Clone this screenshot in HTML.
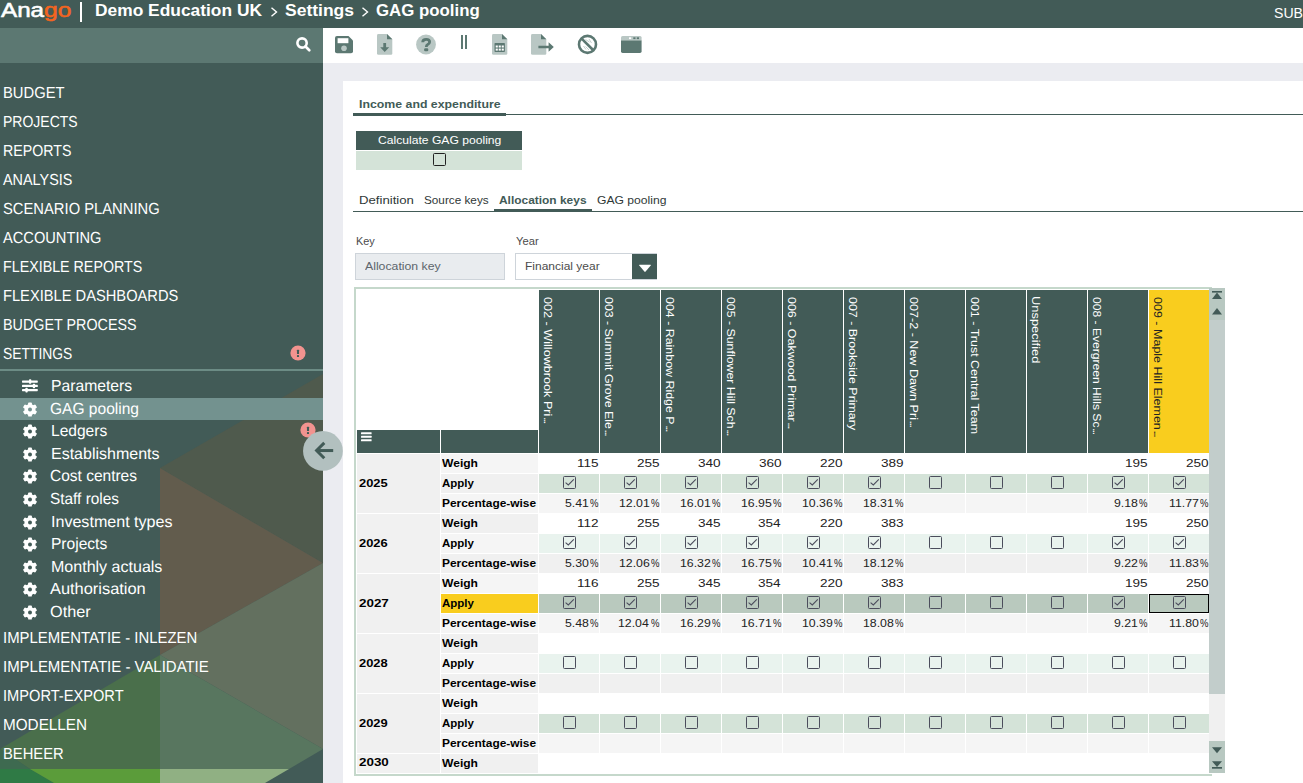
<!DOCTYPE html>
<html><head><meta charset="utf-8"><title>GAG pooling</title>
<style>
html,body{margin:0;padding:0}
body{width:1303px;height:783px;overflow:hidden;background:#fff;font-family:"Liberation Sans", sans-serif;position:relative}
.a{position:absolute}
.t{position:absolute;white-space:nowrap;line-height:20px;transform-origin:0 0;display:block}
.cb{position:absolute;width:11px;height:11px;border:1px solid #4b4d5c;border-radius:1.5px}
.cb svg{position:absolute;left:0;top:0}
.vh{position:absolute;white-space:nowrap;font-size:11.8px;line-height:14px;transform-origin:0 0;transform:rotate(90deg);color:#fff}

</style></head><body>
<div class="a" style="left:0;top:0;width:1303px;height:28px;background:#425b57"></div>
<div class="a" style="left:80.3px;top:2px;width:1.9px;height:20px;background:#fff"></div>
<svg class="a" style="left:269.6px;top:6px" width="9" height="12" viewBox="0 0 9 12"><polyline points="1.5,1.8 6.5,6 1.5,10.2" fill="none" stroke="#fff" stroke-width="1.4"/></svg>
<svg class="a" style="left:360.6px;top:6px" width="9" height="12" viewBox="0 0 9 12"><polyline points="1.5,1.8 6.5,6 1.5,10.2" fill="none" stroke="#fff" stroke-width="1.4"/></svg>
<div class="a" style="left:0;top:28px;width:323px;height:755px;background:#425b57"></div>
<svg class="a" style="left:0;top:0" width="323" height="783" viewBox="0 0 323 783">
<polygon points="160,468 323,374 323,563" fill="#4f5a4d"/>
<polygon points="160,468 323,563 160,655" fill="#625c4d"/>
<polygon points="160,655 323,563 323,749" fill="#63705f"/>
<polygon points="160,655 323,749 289,769 160,769" fill="#58765f"/>
<polygon points="0,749 160,655 160,769 30,769" fill="#4a6f4b"/>
<polygon points="0,749 30,769 0,769" fill="#3e6a50"/>
<polygon points="0,769 30,769 54,783 0,783" fill="#2f7a45"/>
<polygon points="30,769 160,769 160,783 54,783" fill="#5b9c3a"/>
<polygon points="160,769 289,769 265,783 160,783" fill="#90b083"/>
</svg>
<div class="a" style="left:0;top:28px;width:323px;height:35px;background:#5c7872"></div>
<svg class="a" style="left:296px;top:37px" width="16" height="16" viewBox="0 0 16 16"><circle cx="6.05" cy="6" r="4.65" fill="none" stroke="#fff" stroke-width="2.6"/><line x1="9.5" y1="9.5" x2="13.3" y2="13.3" stroke="#fff" stroke-width="2.7" stroke-linecap="round"/></svg>
<div class="a" style="left:0;top:369px;width:323px;height:2px;background:#6c8c85"></div>
<div class="a" style="left:0;top:398px;width:323px;height:22px;background:#73928f"></div>
<svg class="a" style="left:290.2px;top:345.3px" width="16" height="16" viewBox="0 0 16 16"><circle cx="8" cy="8" r="7.6" fill="#f2938f"/><rect x="6.95" y="4.7" width="2.1" height="4.3" rx="0.5" fill="#3f5b57"/><rect x="6.95" y="10.1" width="2.1" height="1.9" rx="0.6" fill="#3f5b57"/></svg>
<svg class="a" style="left:300.2px;top:422.35px" width="16" height="16" viewBox="0 0 16 16"><circle cx="8" cy="8" r="7.6" fill="#f2938f"/><rect x="6.95" y="4.7" width="2.1" height="4.3" rx="0.5" fill="#3f5b57"/><rect x="6.95" y="10.1" width="2.1" height="1.9" rx="0.6" fill="#3f5b57"/></svg>
<svg class="a" style="left:22px;top:378px" width="16" height="15" viewBox="0 0 16 15"><g fill="#fff"><rect x="0" y="2.4" width="15.8" height="2.3" rx="0.6"/><rect x="0" y="6.8" width="15.8" height="2.3" rx="0.6"/><rect x="0" y="10.9" width="15.8" height="2.3" rx="0.6"/><rect x="7" y="1.2" width="2.3" height="4.6" rx="0.7"/><rect x="10.8" y="5.7" width="2.3" height="4.6" rx="0.7"/><rect x="3.4" y="9.8" width="2.3" height="4.6" rx="0.7"/></g></svg>
<svg class="a" style="left:23px;top:401.5px" width="14" height="15" viewBox="-7 -7.5 14 15"><g fill="#fff"><circle r="5.5"/><rect x="-1.9" y="-7.1" width="3.8" height="4" rx="0.9" transform="rotate(0)"/><rect x="-1.9" y="-7.1" width="3.8" height="4" rx="0.9" transform="rotate(60)"/><rect x="-1.9" y="-7.1" width="3.8" height="4" rx="0.9" transform="rotate(120)"/><rect x="-1.9" y="-7.1" width="3.8" height="4" rx="0.9" transform="rotate(180)"/><rect x="-1.9" y="-7.1" width="3.8" height="4" rx="0.9" transform="rotate(240)"/><rect x="-1.9" y="-7.1" width="3.8" height="4" rx="0.9" transform="rotate(300)"/></g><circle r="2.0" fill="#73928f"/></svg>
<svg class="a" style="left:23px;top:423.5px" width="14" height="15" viewBox="-7 -7.5 14 15"><g fill="#fff"><circle r="5.5"/><rect x="-1.9" y="-7.1" width="3.8" height="4" rx="0.9" transform="rotate(0)"/><rect x="-1.9" y="-7.1" width="3.8" height="4" rx="0.9" transform="rotate(60)"/><rect x="-1.9" y="-7.1" width="3.8" height="4" rx="0.9" transform="rotate(120)"/><rect x="-1.9" y="-7.1" width="3.8" height="4" rx="0.9" transform="rotate(180)"/><rect x="-1.9" y="-7.1" width="3.8" height="4" rx="0.9" transform="rotate(240)"/><rect x="-1.9" y="-7.1" width="3.8" height="4" rx="0.9" transform="rotate(300)"/></g><circle r="2.0" fill="#425b57"/></svg>
<svg class="a" style="left:23px;top:446.5px" width="14" height="15" viewBox="-7 -7.5 14 15"><g fill="#fff"><circle r="5.5"/><rect x="-1.9" y="-7.1" width="3.8" height="4" rx="0.9" transform="rotate(0)"/><rect x="-1.9" y="-7.1" width="3.8" height="4" rx="0.9" transform="rotate(60)"/><rect x="-1.9" y="-7.1" width="3.8" height="4" rx="0.9" transform="rotate(120)"/><rect x="-1.9" y="-7.1" width="3.8" height="4" rx="0.9" transform="rotate(180)"/><rect x="-1.9" y="-7.1" width="3.8" height="4" rx="0.9" transform="rotate(240)"/><rect x="-1.9" y="-7.1" width="3.8" height="4" rx="0.9" transform="rotate(300)"/></g><circle r="2.0" fill="#425b57"/></svg>
<svg class="a" style="left:23px;top:468.5px" width="14" height="15" viewBox="-7 -7.5 14 15"><g fill="#fff"><circle r="5.5"/><rect x="-1.9" y="-7.1" width="3.8" height="4" rx="0.9" transform="rotate(0)"/><rect x="-1.9" y="-7.1" width="3.8" height="4" rx="0.9" transform="rotate(60)"/><rect x="-1.9" y="-7.1" width="3.8" height="4" rx="0.9" transform="rotate(120)"/><rect x="-1.9" y="-7.1" width="3.8" height="4" rx="0.9" transform="rotate(180)"/><rect x="-1.9" y="-7.1" width="3.8" height="4" rx="0.9" transform="rotate(240)"/><rect x="-1.9" y="-7.1" width="3.8" height="4" rx="0.9" transform="rotate(300)"/></g><circle r="2.0" fill="#425b57"/></svg>
<svg class="a" style="left:23px;top:491.5px" width="14" height="15" viewBox="-7 -7.5 14 15"><g fill="#fff"><circle r="5.5"/><rect x="-1.9" y="-7.1" width="3.8" height="4" rx="0.9" transform="rotate(0)"/><rect x="-1.9" y="-7.1" width="3.8" height="4" rx="0.9" transform="rotate(60)"/><rect x="-1.9" y="-7.1" width="3.8" height="4" rx="0.9" transform="rotate(120)"/><rect x="-1.9" y="-7.1" width="3.8" height="4" rx="0.9" transform="rotate(180)"/><rect x="-1.9" y="-7.1" width="3.8" height="4" rx="0.9" transform="rotate(240)"/><rect x="-1.9" y="-7.1" width="3.8" height="4" rx="0.9" transform="rotate(300)"/></g><circle r="2.0" fill="#425b57"/></svg>
<svg class="a" style="left:23px;top:514.5px" width="14" height="15" viewBox="-7 -7.5 14 15"><g fill="#fff"><circle r="5.5"/><rect x="-1.9" y="-7.1" width="3.8" height="4" rx="0.9" transform="rotate(0)"/><rect x="-1.9" y="-7.1" width="3.8" height="4" rx="0.9" transform="rotate(60)"/><rect x="-1.9" y="-7.1" width="3.8" height="4" rx="0.9" transform="rotate(120)"/><rect x="-1.9" y="-7.1" width="3.8" height="4" rx="0.9" transform="rotate(180)"/><rect x="-1.9" y="-7.1" width="3.8" height="4" rx="0.9" transform="rotate(240)"/><rect x="-1.9" y="-7.1" width="3.8" height="4" rx="0.9" transform="rotate(300)"/></g><circle r="2.0" fill="#425b57"/></svg>
<svg class="a" style="left:23px;top:536.5px" width="14" height="15" viewBox="-7 -7.5 14 15"><g fill="#fff"><circle r="5.5"/><rect x="-1.9" y="-7.1" width="3.8" height="4" rx="0.9" transform="rotate(0)"/><rect x="-1.9" y="-7.1" width="3.8" height="4" rx="0.9" transform="rotate(60)"/><rect x="-1.9" y="-7.1" width="3.8" height="4" rx="0.9" transform="rotate(120)"/><rect x="-1.9" y="-7.1" width="3.8" height="4" rx="0.9" transform="rotate(180)"/><rect x="-1.9" y="-7.1" width="3.8" height="4" rx="0.9" transform="rotate(240)"/><rect x="-1.9" y="-7.1" width="3.8" height="4" rx="0.9" transform="rotate(300)"/></g><circle r="2.0" fill="#425b57"/></svg>
<svg class="a" style="left:23px;top:559.5px" width="14" height="15" viewBox="-7 -7.5 14 15"><g fill="#fff"><circle r="5.5"/><rect x="-1.9" y="-7.1" width="3.8" height="4" rx="0.9" transform="rotate(0)"/><rect x="-1.9" y="-7.1" width="3.8" height="4" rx="0.9" transform="rotate(60)"/><rect x="-1.9" y="-7.1" width="3.8" height="4" rx="0.9" transform="rotate(120)"/><rect x="-1.9" y="-7.1" width="3.8" height="4" rx="0.9" transform="rotate(180)"/><rect x="-1.9" y="-7.1" width="3.8" height="4" rx="0.9" transform="rotate(240)"/><rect x="-1.9" y="-7.1" width="3.8" height="4" rx="0.9" transform="rotate(300)"/></g><circle r="2.0" fill="#425b57"/></svg>
<svg class="a" style="left:23px;top:581.5px" width="14" height="15" viewBox="-7 -7.5 14 15"><g fill="#fff"><circle r="5.5"/><rect x="-1.9" y="-7.1" width="3.8" height="4" rx="0.9" transform="rotate(0)"/><rect x="-1.9" y="-7.1" width="3.8" height="4" rx="0.9" transform="rotate(60)"/><rect x="-1.9" y="-7.1" width="3.8" height="4" rx="0.9" transform="rotate(120)"/><rect x="-1.9" y="-7.1" width="3.8" height="4" rx="0.9" transform="rotate(180)"/><rect x="-1.9" y="-7.1" width="3.8" height="4" rx="0.9" transform="rotate(240)"/><rect x="-1.9" y="-7.1" width="3.8" height="4" rx="0.9" transform="rotate(300)"/></g><circle r="2.0" fill="#425b57"/></svg>
<svg class="a" style="left:23px;top:604.5px" width="14" height="15" viewBox="-7 -7.5 14 15"><g fill="#fff"><circle r="5.5"/><rect x="-1.9" y="-7.1" width="3.8" height="4" rx="0.9" transform="rotate(0)"/><rect x="-1.9" y="-7.1" width="3.8" height="4" rx="0.9" transform="rotate(60)"/><rect x="-1.9" y="-7.1" width="3.8" height="4" rx="0.9" transform="rotate(120)"/><rect x="-1.9" y="-7.1" width="3.8" height="4" rx="0.9" transform="rotate(180)"/><rect x="-1.9" y="-7.1" width="3.8" height="4" rx="0.9" transform="rotate(240)"/><rect x="-1.9" y="-7.1" width="3.8" height="4" rx="0.9" transform="rotate(300)"/></g><circle r="2.0" fill="#425b57"/></svg>
<div class="a" style="left:323px;top:28px;width:980px;height:35px;background:#fff"></div>
<div class="a" style="left:323px;top:63px;width:980px;height:720px;background:#ebecf1"></div>
<div class="a" style="left:343px;top:81px;width:960px;height:702px;background:#fff"></div>
<svg class="a" style="left:335px;top:36px" width="18" height="18" viewBox="0 0 18 18"><path d="M2,0 H13.5 L18,4.5 V15.5 Q18,17.3 16,17.3 H2 Q0,17.3 0,15.5 V2 Q0,0 2,0 Z" fill="#5c7872"/><rect x="2.6" y="2.2" width="10.8" height="5" fill="#fff"/><circle cx="9" cy="12.3" r="2.8" fill="#b9c7c4"/></svg>
<svg class="a" style="left:377px;top:34px" width="16" height="21" viewBox="0 0 16 21"><path d="M1.5,0 H10 L15.3,5.3 V19.5 Q15.3,20.7 14,20.7 H1.5 Q0,20.7 0,19.5 V1.3 Q0,0 1.5,0 Z" fill="#b9c7c4"/><path d="M10,0 L15.3,5.3 H10 Z" fill="#5c7872"/><path d="M6.3,8.9 h2.8 v4.3 h3.1 l-4.5,4.8 l-4.5,-4.8 h3.1 z" fill="#5c7872"/></svg>
<svg class="a" style="left:416px;top:34px" width="20" height="21" viewBox="0 0 20 21"><circle cx="10" cy="10.5" r="9.9" fill="#b9c7c4"/><path d="M6.7,8.3 Q6.7,5.4 10.2,5.4 Q13.6,5.4 13.6,8 Q13.6,9.6 11.7,10.5 Q10.3,11.2 10.3,12.9" fill="none" stroke="#5c7872" stroke-width="2.8"/><rect x="8.1" y="14.3" width="4.2" height="3" rx="1.2" fill="#5c7872"/></svg>
<div class="a" style="left:461.4px;top:35px;width:2.1px;height:14px;background:#5c7872"></div>
<div class="a" style="left:465px;top:35px;width:2px;height:14px;background:#5c7872"></div>
<svg class="a" style="left:492px;top:34px" width="16" height="21" viewBox="0 0 16 21"><path d="M1.5,0 H10 L15.3,5.3 V19.5 Q15.3,20.7 14,20.7 H1.5 Q0,20.7 0,19.5 V1.3 Q0,0 1.5,0 Z" fill="#b9c7c4"/><path d="M10,0 L15.3,5.3 H10 Z" fill="#5c7872"/><rect x="2.5" y="9" width="10.4" height="9" rx="0.8" fill="#5c7872"/><g fill="#fff"><rect x="3.7" y="11.5" width="2.1" height="2"/><rect x="6.7" y="11.5" width="2.1" height="2"/><rect x="9.7" y="11.5" width="2.1" height="2"/><rect x="3.7" y="14.6" width="2.1" height="2"/><rect x="6.7" y="14.6" width="2.1" height="2"/><rect x="9.7" y="14.6" width="2.1" height="2"/></g></svg>
<svg class="a" style="left:531px;top:34px" width="24" height="21" viewBox="0 0 24 21"><path d="M1.5,0 H10 L15.3,5.3 V19.5 Q15.3,20.7 14,20.7 H1.5 Q0,20.7 0,19.5 V1.3 Q0,0 1.5,0 Z" fill="#b9c7c4"/><path d="M10,0 L15.3,5.3 H10 Z" fill="#5c7872"/><path d="M7.4,11.8 H17.6 V8.3 L22.8,13 L17.6,17.7 V14.2 H7.4 Z" fill="#5c7872"/></svg>
<svg class="a" style="left:577px;top:34px" width="21" height="21" viewBox="0 0 21 21"><circle cx="10.5" cy="10.4" r="7" fill="#fff"/><g stroke="#c5d0ce" stroke-width="1" fill="none"><path d="M8.5,5.5 L12.5,8 M12,5 L14.5,9 M6.5,12 L9,15.5 M8.5,12.5 L12,16"/></g><circle cx="10.5" cy="10.4" r="8.5" fill="none" stroke="#5c7872" stroke-width="2.6"/><line x1="4.4" y1="4.3" x2="16.6" y2="16.5" stroke="#5c7872" stroke-width="2.6"/></svg>
<svg class="a" style="left:621px;top:36px" width="21" height="17" viewBox="0 0 21 17"><path d="M0,4.3 H20.6 V15.3 Q20.6,17 19,17 H1.6 Q0,17 0,15.3 Z" fill="#5c7872"/><path d="M1.6,0 H19 Q20.6,0 20.6,1.6 V4.3 H0 V1.6 Q0,0 1.6,0 Z" fill="#b9c7c4"/><rect x="8" y="1.3" width="2.2" height="1.8" fill="#fff"/><rect x="12.3" y="1.3" width="2.2" height="1.8" fill="#5c7872"/><rect x="15.8" y="1.3" width="2.2" height="1.8" fill="#5c7872"/></svg>
<div class="a" style="left:353px;top:114.3px;width:950px;height:1px;background:#425b57"></div>
<div class="a" style="left:353px;top:112.5px;width:153px;height:3px;background:#425b57"></div>
<div class="a" style="left:356px;top:131px;width:166px;height:19px;background:#425b57"></div>
<div class="a" style="left:356px;top:151px;width:166px;height:19px;background:#d4e3d8"></div>
<div class="cb" style="left:433px;top:153px;border-color:#222"></div>
<div class="a" style="left:353px;top:210.5px;width:950px;height:1px;background:#425b57"></div>
<div class="a" style="left:494px;top:208.7px;width:97.5px;height:3px;background:#425b57"></div>
<div class="a" style="left:355px;top:253px;width:148px;height:25px;background:#e9ecef;border:1px solid #ced4da"></div>
<div class="a" style="left:515px;top:253px;width:140px;height:25px;background:#fff;border:1px solid #ced4da"></div>
<div class="a" style="left:632px;top:254px;width:25px;height:25px;background:#425b57"></div>
<svg class="a" style="left:638px;top:264px" width="14" height="9" viewBox="0 0 14 9"><path d="M1.6,0.8 H12.4 Q13.3,0.8 12.7,1.6 L7.6,7.6 Q7,8.2 6.4,7.6 L1.3,1.6 Q0.7,0.8 1.6,0.8 Z" fill="#fff"/></svg>
<div class="a" style="left:354px;top:287px;width:854px;height:485px;border:2px solid #c5d8cb;border-right:none;background:#fff"></div>
<div class="a" style="left:1208px;top:287px;width:4px;height:2px;background:#c5d8cb"></div>
<div class="a" style="left:1208px;top:774px;width:4px;height:2px;background:#c5d8cb"></div>
<div class="a" style="left:357px;top:430px;width:83px;height:23px;background:#425b57"></div>
<div class="a" style="left:441px;top:430px;width:97px;height:23px;background:#425b57"></div>
<svg class="a" style="left:361px;top:432px" width="11" height="10" viewBox="0 0 11 10"><g fill="#fff"><rect x="0" y="0.3" width="10.6" height="1.9" rx="0.5"/><rect x="0" y="3.8" width="10.6" height="1.9" rx="0.5"/><rect x="0" y="7.3" width="10.6" height="1.9" rx="0.5"/></g></svg>
<div class="a" style="left:539px;top:290px;width:60px;height:163px;background:#425b57"></div>
<div class="vh" style="left:554.6px;top:297.30px;color:#fff;transform:rotate(90deg) scaleX(1.0712)">002 - Willowbrook Pri<span style="letter-spacing:-1.5px;margin-left:0.6px">...</span></div>
<div class="a" style="left:600px;top:290px;width:60px;height:163px;background:#425b57"></div>
<div class="vh" style="left:615.6px;top:297.30px;color:#fff;transform:rotate(90deg) scaleX(1.0481)">003 - Summit Grove Ele<span style="letter-spacing:-1.5px;margin-left:0.6px">...</span></div>
<div class="a" style="left:661px;top:290px;width:60px;height:163px;background:#425b57"></div>
<div class="vh" style="left:676.6px;top:297.30px;color:#fff;transform:rotate(90deg) scaleX(1.0516)">004 - Rainbow Ridge P<span style="letter-spacing:-1.5px;margin-left:0.6px">...</span></div>
<div class="a" style="left:722px;top:290px;width:60px;height:163px;background:#425b57"></div>
<div class="vh" style="left:737.6px;top:297.30px;color:#fff;transform:rotate(90deg) scaleX(1.0451)">005 - Sunflower Hill Sch<span style="letter-spacing:-1.5px;margin-left:0.6px">...</span></div>
<div class="a" style="left:783px;top:290px;width:60px;height:163px;background:#425b57"></div>
<div class="vh" style="left:798.6px;top:297.30px;color:#fff;transform:rotate(90deg) scaleX(1.0560)">006 - Oakwood Primar<span style="letter-spacing:-1.5px;margin-left:0.6px">...</span></div>
<div class="a" style="left:844px;top:290px;width:60px;height:163px;background:#425b57"></div>
<div class="vh" style="left:859.6px;top:297.30px;color:#fff;transform:rotate(90deg) scaleX(1.0520)">007 - Brookside Primary</div>
<div class="a" style="left:905px;top:290px;width:60px;height:163px;background:#425b57"></div>
<div class="vh" style="left:920.6px;top:297.30px;color:#fff;transform:rotate(90deg) scaleX(1.0656)">007-2 - New Dawn Pri<span style="letter-spacing:-1.5px;margin-left:0.6px">...</span></div>
<div class="a" style="left:966px;top:290px;width:60px;height:163px;background:#425b57"></div>
<div class="vh" style="left:981.6px;top:297.30px;color:#fff;transform:rotate(90deg) scaleX(1.0574)">001 - Trust Central Team</div>
<div class="a" style="left:1027px;top:290px;width:60px;height:163px;background:#425b57"></div>
<div class="vh" style="left:1042.6px;top:296.30px;color:#fff;transform:rotate(90deg) scaleX(1.0933)">Unspecified</div>
<div class="a" style="left:1088px;top:290px;width:60px;height:163px;background:#425b57"></div>
<div class="vh" style="left:1103.6px;top:297.30px;color:#fff;transform:rotate(90deg) scaleX(1.0254)">008 - Evergreen Hills Sc<span style="letter-spacing:-1.5px;margin-left:0.6px">...</span></div>
<div class="a" style="left:1149px;top:290px;width:60px;height:163px;background:#f9cd1e"></div>
<div class="vh" style="left:1164.6px;top:297.30px;color:#222;transform:rotate(90deg) scaleX(1.0606)">009 - Maple Hill Elemen<span style="letter-spacing:-1.5px;margin-left:0.6px">...</span></div>
<div class="a" style="left:441px;top:454px;width:97px;height:19px;background:#f5f5f5"></div>
<div class="a" style="left:357px;top:454px;width:83px;height:59px;background:#f0f0f0"></div>
<div class="a" style="left:441px;top:474px;width:97px;height:19px;background:#f0f0f0"></div>
<div class="a" style="left:539px;top:474px;width:60px;height:19px;background:#d4e3d8"></div>
<div class="cb" style="left:563px;top:476px"><svg width="11" height="11" viewBox="0 0 11 11"><polyline points="1.6,5.6 4.3,8 9.8,2.4" fill="none" stroke="#4b4d5c" stroke-width="1.1"/></svg></div>
<div class="a" style="left:600px;top:474px;width:60px;height:19px;background:#d4e3d8"></div>
<div class="cb" style="left:624px;top:476px"><svg width="11" height="11" viewBox="0 0 11 11"><polyline points="1.6,5.6 4.3,8 9.8,2.4" fill="none" stroke="#4b4d5c" stroke-width="1.1"/></svg></div>
<div class="a" style="left:661px;top:474px;width:60px;height:19px;background:#d4e3d8"></div>
<div class="cb" style="left:685px;top:476px"><svg width="11" height="11" viewBox="0 0 11 11"><polyline points="1.6,5.6 4.3,8 9.8,2.4" fill="none" stroke="#4b4d5c" stroke-width="1.1"/></svg></div>
<div class="a" style="left:722px;top:474px;width:60px;height:19px;background:#d4e3d8"></div>
<div class="cb" style="left:746px;top:476px"><svg width="11" height="11" viewBox="0 0 11 11"><polyline points="1.6,5.6 4.3,8 9.8,2.4" fill="none" stroke="#4b4d5c" stroke-width="1.1"/></svg></div>
<div class="a" style="left:783px;top:474px;width:60px;height:19px;background:#d4e3d8"></div>
<div class="cb" style="left:807px;top:476px"><svg width="11" height="11" viewBox="0 0 11 11"><polyline points="1.6,5.6 4.3,8 9.8,2.4" fill="none" stroke="#4b4d5c" stroke-width="1.1"/></svg></div>
<div class="a" style="left:844px;top:474px;width:60px;height:19px;background:#d4e3d8"></div>
<div class="cb" style="left:868px;top:476px"><svg width="11" height="11" viewBox="0 0 11 11"><polyline points="1.6,5.6 4.3,8 9.8,2.4" fill="none" stroke="#4b4d5c" stroke-width="1.1"/></svg></div>
<div class="a" style="left:905px;top:474px;width:60px;height:19px;background:#d4e3d8"></div>
<div class="cb" style="left:929px;top:476px"></div>
<div class="a" style="left:966px;top:474px;width:60px;height:19px;background:#d4e3d8"></div>
<div class="cb" style="left:990px;top:476px"></div>
<div class="a" style="left:1027px;top:474px;width:60px;height:19px;background:#d4e3d8"></div>
<div class="cb" style="left:1051px;top:476px"></div>
<div class="a" style="left:1088px;top:474px;width:60px;height:19px;background:#d4e3d8"></div>
<div class="cb" style="left:1112px;top:476px"><svg width="11" height="11" viewBox="0 0 11 11"><polyline points="1.6,5.6 4.3,8 9.8,2.4" fill="none" stroke="#4b4d5c" stroke-width="1.1"/></svg></div>
<div class="a" style="left:1149px;top:474px;width:60px;height:19px;background:#d4e3d8"></div>
<div class="cb" style="left:1173px;top:476px"><svg width="11" height="11" viewBox="0 0 11 11"><polyline points="1.6,5.6 4.3,8 9.8,2.4" fill="none" stroke="#4b4d5c" stroke-width="1.1"/></svg></div>
<div class="a" style="left:441px;top:494px;width:97px;height:19px;background:#f5f5f5"></div>
<div class="a" style="left:539px;top:494px;width:60px;height:19px;background:#f5f5f5"></div>
<div class="a" style="left:600px;top:494px;width:60px;height:19px;background:#f5f5f5"></div>
<div class="a" style="left:661px;top:494px;width:60px;height:19px;background:#f5f5f5"></div>
<div class="a" style="left:722px;top:494px;width:60px;height:19px;background:#f5f5f5"></div>
<div class="a" style="left:783px;top:494px;width:60px;height:19px;background:#f5f5f5"></div>
<div class="a" style="left:844px;top:494px;width:60px;height:19px;background:#f5f5f5"></div>
<div class="a" style="left:905px;top:494px;width:60px;height:19px;background:#f5f5f5"></div>
<div class="a" style="left:966px;top:494px;width:60px;height:19px;background:#f5f5f5"></div>
<div class="a" style="left:1027px;top:494px;width:60px;height:19px;background:#f5f5f5"></div>
<div class="a" style="left:1088px;top:494px;width:60px;height:19px;background:#f5f5f5"></div>
<div class="a" style="left:1149px;top:494px;width:60px;height:19px;background:#f5f5f5"></div>
<div class="a" style="left:441px;top:514px;width:97px;height:19px;background:#f0f0f0"></div>
<div class="a" style="left:357px;top:514px;width:83px;height:59px;background:#f1f1f1"></div>
<div class="a" style="left:441px;top:534px;width:97px;height:19px;background:#f5f5f5"></div>
<div class="a" style="left:539px;top:534px;width:60px;height:19px;background:#e9f3ee"></div>
<div class="cb" style="left:563px;top:536px"><svg width="11" height="11" viewBox="0 0 11 11"><polyline points="1.6,5.6 4.3,8 9.8,2.4" fill="none" stroke="#4b4d5c" stroke-width="1.1"/></svg></div>
<div class="a" style="left:600px;top:534px;width:60px;height:19px;background:#e9f3ee"></div>
<div class="cb" style="left:624px;top:536px"><svg width="11" height="11" viewBox="0 0 11 11"><polyline points="1.6,5.6 4.3,8 9.8,2.4" fill="none" stroke="#4b4d5c" stroke-width="1.1"/></svg></div>
<div class="a" style="left:661px;top:534px;width:60px;height:19px;background:#e9f3ee"></div>
<div class="cb" style="left:685px;top:536px"><svg width="11" height="11" viewBox="0 0 11 11"><polyline points="1.6,5.6 4.3,8 9.8,2.4" fill="none" stroke="#4b4d5c" stroke-width="1.1"/></svg></div>
<div class="a" style="left:722px;top:534px;width:60px;height:19px;background:#e9f3ee"></div>
<div class="cb" style="left:746px;top:536px"><svg width="11" height="11" viewBox="0 0 11 11"><polyline points="1.6,5.6 4.3,8 9.8,2.4" fill="none" stroke="#4b4d5c" stroke-width="1.1"/></svg></div>
<div class="a" style="left:783px;top:534px;width:60px;height:19px;background:#e9f3ee"></div>
<div class="cb" style="left:807px;top:536px"><svg width="11" height="11" viewBox="0 0 11 11"><polyline points="1.6,5.6 4.3,8 9.8,2.4" fill="none" stroke="#4b4d5c" stroke-width="1.1"/></svg></div>
<div class="a" style="left:844px;top:534px;width:60px;height:19px;background:#e9f3ee"></div>
<div class="cb" style="left:868px;top:536px"><svg width="11" height="11" viewBox="0 0 11 11"><polyline points="1.6,5.6 4.3,8 9.8,2.4" fill="none" stroke="#4b4d5c" stroke-width="1.1"/></svg></div>
<div class="a" style="left:905px;top:534px;width:60px;height:19px;background:#e9f3ee"></div>
<div class="cb" style="left:929px;top:536px"></div>
<div class="a" style="left:966px;top:534px;width:60px;height:19px;background:#e9f3ee"></div>
<div class="cb" style="left:990px;top:536px"></div>
<div class="a" style="left:1027px;top:534px;width:60px;height:19px;background:#e9f3ee"></div>
<div class="cb" style="left:1051px;top:536px"></div>
<div class="a" style="left:1088px;top:534px;width:60px;height:19px;background:#e9f3ee"></div>
<div class="cb" style="left:1112px;top:536px"><svg width="11" height="11" viewBox="0 0 11 11"><polyline points="1.6,5.6 4.3,8 9.8,2.4" fill="none" stroke="#4b4d5c" stroke-width="1.1"/></svg></div>
<div class="a" style="left:1149px;top:534px;width:60px;height:19px;background:#e9f3ee"></div>
<div class="cb" style="left:1173px;top:536px"><svg width="11" height="11" viewBox="0 0 11 11"><polyline points="1.6,5.6 4.3,8 9.8,2.4" fill="none" stroke="#4b4d5c" stroke-width="1.1"/></svg></div>
<div class="a" style="left:441px;top:554px;width:97px;height:19px;background:#f0f0f0"></div>
<div class="a" style="left:539px;top:554px;width:60px;height:19px;background:#f0f0f0"></div>
<div class="a" style="left:600px;top:554px;width:60px;height:19px;background:#f0f0f0"></div>
<div class="a" style="left:661px;top:554px;width:60px;height:19px;background:#f0f0f0"></div>
<div class="a" style="left:722px;top:554px;width:60px;height:19px;background:#f0f0f0"></div>
<div class="a" style="left:783px;top:554px;width:60px;height:19px;background:#f0f0f0"></div>
<div class="a" style="left:844px;top:554px;width:60px;height:19px;background:#f0f0f0"></div>
<div class="a" style="left:905px;top:554px;width:60px;height:19px;background:#f0f0f0"></div>
<div class="a" style="left:966px;top:554px;width:60px;height:19px;background:#f0f0f0"></div>
<div class="a" style="left:1027px;top:554px;width:60px;height:19px;background:#f0f0f0"></div>
<div class="a" style="left:1088px;top:554px;width:60px;height:19px;background:#f0f0f0"></div>
<div class="a" style="left:1149px;top:554px;width:60px;height:19px;background:#f0f0f0"></div>
<div class="a" style="left:441px;top:574px;width:97px;height:19px;background:#f5f5f5"></div>
<div class="a" style="left:357px;top:574px;width:83px;height:59px;background:#f0f0f0"></div>
<div class="a" style="left:441px;top:594px;width:97px;height:19px;background:#f9cd1e"></div>
<div class="a" style="left:539px;top:594px;width:60px;height:19px;background:#b9c9be"></div>
<div class="cb" style="left:563px;top:596px"><svg width="11" height="11" viewBox="0 0 11 11"><polyline points="1.6,5.6 4.3,8 9.8,2.4" fill="none" stroke="#4b4d5c" stroke-width="1.1"/></svg></div>
<div class="a" style="left:600px;top:594px;width:60px;height:19px;background:#b9c9be"></div>
<div class="cb" style="left:624px;top:596px"><svg width="11" height="11" viewBox="0 0 11 11"><polyline points="1.6,5.6 4.3,8 9.8,2.4" fill="none" stroke="#4b4d5c" stroke-width="1.1"/></svg></div>
<div class="a" style="left:661px;top:594px;width:60px;height:19px;background:#b9c9be"></div>
<div class="cb" style="left:685px;top:596px"><svg width="11" height="11" viewBox="0 0 11 11"><polyline points="1.6,5.6 4.3,8 9.8,2.4" fill="none" stroke="#4b4d5c" stroke-width="1.1"/></svg></div>
<div class="a" style="left:722px;top:594px;width:60px;height:19px;background:#b9c9be"></div>
<div class="cb" style="left:746px;top:596px"><svg width="11" height="11" viewBox="0 0 11 11"><polyline points="1.6,5.6 4.3,8 9.8,2.4" fill="none" stroke="#4b4d5c" stroke-width="1.1"/></svg></div>
<div class="a" style="left:783px;top:594px;width:60px;height:19px;background:#b9c9be"></div>
<div class="cb" style="left:807px;top:596px"><svg width="11" height="11" viewBox="0 0 11 11"><polyline points="1.6,5.6 4.3,8 9.8,2.4" fill="none" stroke="#4b4d5c" stroke-width="1.1"/></svg></div>
<div class="a" style="left:844px;top:594px;width:60px;height:19px;background:#b9c9be"></div>
<div class="cb" style="left:868px;top:596px"><svg width="11" height="11" viewBox="0 0 11 11"><polyline points="1.6,5.6 4.3,8 9.8,2.4" fill="none" stroke="#4b4d5c" stroke-width="1.1"/></svg></div>
<div class="a" style="left:905px;top:594px;width:60px;height:19px;background:#b9c9be"></div>
<div class="cb" style="left:929px;top:596px"></div>
<div class="a" style="left:966px;top:594px;width:60px;height:19px;background:#b9c9be"></div>
<div class="cb" style="left:990px;top:596px"></div>
<div class="a" style="left:1027px;top:594px;width:60px;height:19px;background:#b9c9be"></div>
<div class="cb" style="left:1051px;top:596px"></div>
<div class="a" style="left:1088px;top:594px;width:60px;height:19px;background:#b9c9be"></div>
<div class="cb" style="left:1112px;top:596px"><svg width="11" height="11" viewBox="0 0 11 11"><polyline points="1.6,5.6 4.3,8 9.8,2.4" fill="none" stroke="#4b4d5c" stroke-width="1.1"/></svg></div>
<div class="a" style="left:1149px;top:594px;width:60px;height:19px;background:#b9c9be"></div>
<div class="cb" style="left:1173px;top:596px"><svg width="11" height="11" viewBox="0 0 11 11"><polyline points="1.6,5.6 4.3,8 9.8,2.4" fill="none" stroke="#4b4d5c" stroke-width="1.1"/></svg></div>
<div class="a" style="left:441px;top:614px;width:97px;height:19px;background:#f5f5f5"></div>
<div class="a" style="left:539px;top:614px;width:60px;height:19px;background:#f5f5f5"></div>
<div class="a" style="left:600px;top:614px;width:60px;height:19px;background:#f5f5f5"></div>
<div class="a" style="left:661px;top:614px;width:60px;height:19px;background:#f5f5f5"></div>
<div class="a" style="left:722px;top:614px;width:60px;height:19px;background:#f5f5f5"></div>
<div class="a" style="left:783px;top:614px;width:60px;height:19px;background:#f5f5f5"></div>
<div class="a" style="left:844px;top:614px;width:60px;height:19px;background:#f5f5f5"></div>
<div class="a" style="left:905px;top:614px;width:60px;height:19px;background:#f5f5f5"></div>
<div class="a" style="left:966px;top:614px;width:60px;height:19px;background:#f5f5f5"></div>
<div class="a" style="left:1027px;top:614px;width:60px;height:19px;background:#f5f5f5"></div>
<div class="a" style="left:1088px;top:614px;width:60px;height:19px;background:#f5f5f5"></div>
<div class="a" style="left:1149px;top:614px;width:60px;height:19px;background:#f5f5f5"></div>
<div class="a" style="left:441px;top:634px;width:97px;height:19px;background:#f0f0f0"></div>
<div class="a" style="left:357px;top:634px;width:83px;height:59px;background:#f1f1f1"></div>
<div class="a" style="left:441px;top:654px;width:97px;height:19px;background:#f5f5f5"></div>
<div class="a" style="left:539px;top:654px;width:60px;height:19px;background:#e9f3ee"></div>
<div class="cb" style="left:563px;top:656px"></div>
<div class="a" style="left:600px;top:654px;width:60px;height:19px;background:#e9f3ee"></div>
<div class="cb" style="left:624px;top:656px"></div>
<div class="a" style="left:661px;top:654px;width:60px;height:19px;background:#e9f3ee"></div>
<div class="cb" style="left:685px;top:656px"></div>
<div class="a" style="left:722px;top:654px;width:60px;height:19px;background:#e9f3ee"></div>
<div class="cb" style="left:746px;top:656px"></div>
<div class="a" style="left:783px;top:654px;width:60px;height:19px;background:#e9f3ee"></div>
<div class="cb" style="left:807px;top:656px"></div>
<div class="a" style="left:844px;top:654px;width:60px;height:19px;background:#e9f3ee"></div>
<div class="cb" style="left:868px;top:656px"></div>
<div class="a" style="left:905px;top:654px;width:60px;height:19px;background:#e9f3ee"></div>
<div class="cb" style="left:929px;top:656px"></div>
<div class="a" style="left:966px;top:654px;width:60px;height:19px;background:#e9f3ee"></div>
<div class="cb" style="left:990px;top:656px"></div>
<div class="a" style="left:1027px;top:654px;width:60px;height:19px;background:#e9f3ee"></div>
<div class="cb" style="left:1051px;top:656px"></div>
<div class="a" style="left:1088px;top:654px;width:60px;height:19px;background:#e9f3ee"></div>
<div class="cb" style="left:1112px;top:656px"></div>
<div class="a" style="left:1149px;top:654px;width:60px;height:19px;background:#e9f3ee"></div>
<div class="cb" style="left:1173px;top:656px"></div>
<div class="a" style="left:441px;top:674px;width:97px;height:19px;background:#f0f0f0"></div>
<div class="a" style="left:539px;top:674px;width:60px;height:19px;background:#f0f0f0"></div>
<div class="a" style="left:600px;top:674px;width:60px;height:19px;background:#f0f0f0"></div>
<div class="a" style="left:661px;top:674px;width:60px;height:19px;background:#f0f0f0"></div>
<div class="a" style="left:722px;top:674px;width:60px;height:19px;background:#f0f0f0"></div>
<div class="a" style="left:783px;top:674px;width:60px;height:19px;background:#f0f0f0"></div>
<div class="a" style="left:844px;top:674px;width:60px;height:19px;background:#f0f0f0"></div>
<div class="a" style="left:905px;top:674px;width:60px;height:19px;background:#f0f0f0"></div>
<div class="a" style="left:966px;top:674px;width:60px;height:19px;background:#f0f0f0"></div>
<div class="a" style="left:1027px;top:674px;width:60px;height:19px;background:#f0f0f0"></div>
<div class="a" style="left:1088px;top:674px;width:60px;height:19px;background:#f0f0f0"></div>
<div class="a" style="left:1149px;top:674px;width:60px;height:19px;background:#f0f0f0"></div>
<div class="a" style="left:441px;top:694px;width:97px;height:19px;background:#f5f5f5"></div>
<div class="a" style="left:357px;top:694px;width:83px;height:59px;background:#f0f0f0"></div>
<div class="a" style="left:441px;top:714px;width:97px;height:19px;background:#f0f0f0"></div>
<div class="a" style="left:539px;top:714px;width:60px;height:19px;background:#d4e3d8"></div>
<div class="cb" style="left:563px;top:716px"></div>
<div class="a" style="left:600px;top:714px;width:60px;height:19px;background:#d4e3d8"></div>
<div class="cb" style="left:624px;top:716px"></div>
<div class="a" style="left:661px;top:714px;width:60px;height:19px;background:#d4e3d8"></div>
<div class="cb" style="left:685px;top:716px"></div>
<div class="a" style="left:722px;top:714px;width:60px;height:19px;background:#d4e3d8"></div>
<div class="cb" style="left:746px;top:716px"></div>
<div class="a" style="left:783px;top:714px;width:60px;height:19px;background:#d4e3d8"></div>
<div class="cb" style="left:807px;top:716px"></div>
<div class="a" style="left:844px;top:714px;width:60px;height:19px;background:#d4e3d8"></div>
<div class="cb" style="left:868px;top:716px"></div>
<div class="a" style="left:905px;top:714px;width:60px;height:19px;background:#d4e3d8"></div>
<div class="cb" style="left:929px;top:716px"></div>
<div class="a" style="left:966px;top:714px;width:60px;height:19px;background:#d4e3d8"></div>
<div class="cb" style="left:990px;top:716px"></div>
<div class="a" style="left:1027px;top:714px;width:60px;height:19px;background:#d4e3d8"></div>
<div class="cb" style="left:1051px;top:716px"></div>
<div class="a" style="left:1088px;top:714px;width:60px;height:19px;background:#d4e3d8"></div>
<div class="cb" style="left:1112px;top:716px"></div>
<div class="a" style="left:1149px;top:714px;width:60px;height:19px;background:#d4e3d8"></div>
<div class="cb" style="left:1173px;top:716px"></div>
<div class="a" style="left:441px;top:734px;width:97px;height:19px;background:#f5f5f5"></div>
<div class="a" style="left:539px;top:734px;width:60px;height:19px;background:#f5f5f5"></div>
<div class="a" style="left:600px;top:734px;width:60px;height:19px;background:#f5f5f5"></div>
<div class="a" style="left:661px;top:734px;width:60px;height:19px;background:#f5f5f5"></div>
<div class="a" style="left:722px;top:734px;width:60px;height:19px;background:#f5f5f5"></div>
<div class="a" style="left:783px;top:734px;width:60px;height:19px;background:#f5f5f5"></div>
<div class="a" style="left:844px;top:734px;width:60px;height:19px;background:#f5f5f5"></div>
<div class="a" style="left:905px;top:734px;width:60px;height:19px;background:#f5f5f5"></div>
<div class="a" style="left:966px;top:734px;width:60px;height:19px;background:#f5f5f5"></div>
<div class="a" style="left:1027px;top:734px;width:60px;height:19px;background:#f5f5f5"></div>
<div class="a" style="left:1088px;top:734px;width:60px;height:19px;background:#f5f5f5"></div>
<div class="a" style="left:1149px;top:734px;width:60px;height:19px;background:#f5f5f5"></div>
<div class="a" style="left:441px;top:754px;width:97px;height:19px;background:#f0f0f0"></div>
<div class="a" style="left:357px;top:754px;width:83px;height:19px;background:#f1f1f1"></div>
<div class="a" style="left:1149px;top:594px;width:58px;height:17px;border:1px solid #000"></div>
<div class="a" style="left:356px;top:773px;width:854px;height:1px;background:#fff"></div>
<div class="a" style="left:1209px;top:288px;width:16px;height:485px;background:#c2cdcb"></div>
<div class="a" style="left:1209px;top:288px;width:16px;height:32px;background:#b8c8c1"></div>
<div class="a" style="left:1209px;top:694px;width:16px;height:47px;background:#f0f0f0"></div>
<div class="a" style="left:1209px;top:741px;width:16px;height:32px;background:#b8c8c1"></div>
<svg class="a" style="left:1209px;top:288px" width="16" height="485" viewBox="0 0 16 485"><g fill="#425b57"><rect x="3" y="3" width="10" height="1.6"/><polygon points="8,4.6 13,11 3,11"/><polygon points="8,20 13,26.4 3,26.4"/><polygon points="3,459.3 13,459.3 8,465.2"/><polygon points="3,473.3 13,473.3 8,479"/><rect x="3" y="479" width="10" height="1.7"/></g></svg>
<svg class="a" style="left:302px;top:430px" width="42" height="42" viewBox="0 0 42 42"><circle cx="20.95" cy="20.95" r="19.9" fill="#b2c0bf"/><g fill="none" stroke="#425b57" stroke-width="3" stroke-linecap="butt"><line x1="14.6" y1="20.55" x2="31.2" y2="20.55"/><polyline points="22.3,12.9 14.6,20.55 22.3,28.2"/></g></svg>
<span class="t" style="left:0.80px;top:0.00px;font-size:20.5px;font-weight:400;color:#fff;-webkit-text-stroke:0.55px #fff;transform:scaleX(1.1814)">Ana</span>
<span class="t" style="left:43.90px;top:0.00px;font-size:20.5px;font-weight:400;color:#f4651f;-webkit-text-stroke:0.55px #f4651f;transform:scaleX(1.2008)">go</span>
<span class="t" style="left:94.57px;top:1.00px;font-size:16.9px;font-weight:700;color:#fff;transform:scaleX(1.0287)">Demo Education UK</span>
<span class="t" style="left:285.00px;top:1.00px;font-size:16.9px;font-weight:700;color:#fff;transform:scaleX(1.0357)">Settings</span>
<span class="t" style="left:375.60px;top:1.00px;font-size:16.9px;font-weight:700;color:#fff;transform:scaleX(0.9959)">GAG pooling</span>
<span class="t" style="left:1274.00px;top:3.00px;font-size:15.3px;font-weight:400;color:#fff;transform:scaleX(0.9216)">SUB</span>
<span class="t" style="left:2.88px;top:83.00px;font-size:16.0px;font-weight:400;color:#fff;transform:scaleX(0.9241) rotate(0.03deg)">BUDGET</span>
<span class="t" style="left:3.13px;top:112.00px;font-size:16.0px;font-weight:400;color:#fff;transform:scaleX(0.8748) rotate(0.03deg)">PROJECTS</span>
<span class="t" style="left:3.11px;top:141.00px;font-size:16.0px;font-weight:400;color:#fff;transform:scaleX(0.8875) rotate(0.03deg)">REPORTS</span>
<span class="t" style="left:3.00px;top:170.00px;font-size:16.0px;font-weight:400;color:#fff;transform:scaleX(0.9005) rotate(0.03deg)">ANALYSIS</span>
<span class="t" style="left:2.70px;top:199.00px;font-size:16.0px;font-weight:400;color:#fff;transform:scaleX(0.9228) rotate(0.03deg)">SCENARIO PLANNING</span>
<span class="t" style="left:3.00px;top:228.00px;font-size:16.0px;font-weight:400;color:#fff;transform:scaleX(0.9150) rotate(0.03deg)">ACCOUNTING</span>
<span class="t" style="left:3.11px;top:257.00px;font-size:16.0px;font-weight:400;color:#fff;transform:scaleX(0.8917) rotate(0.03deg)">FLEXIBLE REPORTS</span>
<span class="t" style="left:3.08px;top:286.00px;font-size:16.0px;font-weight:400;color:#fff;transform:scaleX(0.9172) rotate(0.03deg)">FLEXIBLE DASHBOARDS</span>
<span class="t" style="left:3.10px;top:315.00px;font-size:16.0px;font-weight:400;color:#fff;transform:scaleX(0.8965) rotate(0.03deg)">BUDGET PROCESS</span>
<span class="t" style="left:3.00px;top:344.00px;font-size:16.0px;font-weight:400;color:#fff;transform:scaleX(0.8672) rotate(0.03deg)">SETTINGS</span>
<span class="t" style="left:2.57px;top:628.00px;font-size:16.0px;font-weight:400;color:#fff;transform:scaleX(0.9325) rotate(0.03deg)">IMPLEMENTATIE - INLEZEN</span>
<span class="t" style="left:2.57px;top:657.00px;font-size:16.0px;font-weight:400;color:#fff;transform:scaleX(0.9345) rotate(0.03deg)">IMPLEMENTATIE - VALIDATIE</span>
<span class="t" style="left:2.59px;top:686.00px;font-size:16.0px;font-weight:400;color:#fff;transform:scaleX(0.9146) rotate(0.03deg)">IMPORT-EXPORT</span>
<span class="t" style="left:2.54px;top:715.00px;font-size:16.0px;font-weight:400;color:#fff;transform:scaleX(0.9553) rotate(0.03deg)">MODELLEN</span>
<span class="t" style="left:2.58px;top:744.00px;font-size:16.0px;font-weight:400;color:#fff;transform:scaleX(0.9231) rotate(0.03deg)">BEHEER</span>
<span class="t" style="left:50.62px;top:376.00px;font-size:16.0px;font-weight:400;color:#fff;transform:scaleX(0.9817) rotate(0.03deg)">Parameters</span>
<span class="t" style="left:50.20px;top:399.00px;font-size:16.0px;font-weight:400;color:#fff;transform:scaleX(0.9712) rotate(0.03deg)">GAG pooling</span>
<span class="t" style="left:50.53px;top:421.00px;font-size:16.0px;font-weight:400;color:#fff;transform:scaleX(0.9715) rotate(0.03deg)">Ledgers</span>
<span class="t" style="left:50.50px;top:444.00px;font-size:16.0px;font-weight:400;color:#fff;transform:scaleX(1.0001) rotate(0.03deg)">Establishments</span>
<span class="t" style="left:50.20px;top:466.00px;font-size:16.0px;font-weight:400;color:#fff;transform:scaleX(0.9687) rotate(0.03deg)">Cost centres</span>
<span class="t" style="left:50.20px;top:489.00px;font-size:16.0px;font-weight:400;color:#fff;transform:scaleX(0.9618) rotate(0.03deg)">Staff roles</span>
<span class="t" style="left:50.50px;top:512.00px;font-size:16.0px;font-weight:400;color:#fff;transform:scaleX(1.0046) rotate(0.03deg)">Investment types</span>
<span class="t" style="left:50.53px;top:534.00px;font-size:16.0px;font-weight:400;color:#fff;transform:scaleX(0.9719) rotate(0.03deg)">Projects</span>
<span class="t" style="left:50.50px;top:557.00px;font-size:16.0px;font-weight:400;color:#fff;transform:scaleX(1.0021) rotate(0.03deg)">Monthly actuals</span>
<span class="t" style="left:50.20px;top:579.00px;font-size:16.0px;font-weight:400;color:#fff;transform:scaleX(1.0250) rotate(0.03deg)">Authorisation</span>
<span class="t" style="left:49.70px;top:602.00px;font-size:16.0px;font-weight:400;color:#fff;transform:scaleX(1.0151) rotate(0.03deg)">Other</span>
<span class="t" style="left:358.50px;top:94.00px;font-size:11.5px;font-weight:700;color:#425b57;transform:scaleX(1.0707)">Income and expenditure</span>
<span class="t" style="left:377.90px;top:130.00px;font-size:11.2px;font-weight:400;color:#fff;transform:scaleX(1.0838)">Calculate GAG pooling</span>
<span class="t" style="left:358.80px;top:190.00px;font-size:11.5px;font-weight:400;color:#2f3837;transform:scaleX(1.1441)">Definition</span>
<span class="t" style="left:424.30px;top:190.00px;font-size:11.5px;font-weight:400;color:#2f3837;transform:scaleX(1.0216)">Source keys</span>
<span class="t" style="left:499.40px;top:190.00px;font-size:11.5px;font-weight:700;color:#425b57;transform:scaleX(1.0373)">Allocation keys</span>
<span class="t" style="left:597.00px;top:190.00px;font-size:11.5px;font-weight:400;color:#2f3837;transform:scaleX(1.0543)">GAG pooling</span>
<span class="t" style="left:355.90px;top:231.00px;font-size:11.5px;font-weight:400;color:#4c4c4c;transform:scaleX(0.9469)">Key</span>
<span class="t" style="left:516.00px;top:231.00px;font-size:11.5px;font-weight:400;color:#4c4c4c;transform:scaleX(0.9741)">Year</span>
<span class="t" style="left:364.80px;top:256.00px;font-size:11.5px;font-weight:400;color:#5d656c;transform:scaleX(1.0659)">Allocation key</span>
<span class="t" style="left:524.80px;top:256.00px;font-size:11.5px;font-weight:400;color:#4c4c4c;transform:scaleX(1.0424)">Financial year</span>
<span class="t" style="left:359.00px;top:473.00px;font-size:11.6px;font-weight:700;color:#000;transform:scaleX(1.1122)">2025</span>
<span class="t" style="left:359.00px;top:533.00px;font-size:11.6px;font-weight:700;color:#000;transform:scaleX(1.1122)">2026</span>
<span class="t" style="left:359.00px;top:593.00px;font-size:11.6px;font-weight:700;color:#000;transform:scaleX(1.1561)">2027</span>
<span class="t" style="left:359.00px;top:653.00px;font-size:11.6px;font-weight:700;color:#000;transform:scaleX(1.1122)">2028</span>
<span class="t" style="left:359.00px;top:713.00px;font-size:11.6px;font-weight:700;color:#000;transform:scaleX(1.1122)">2029</span>
<span class="t" style="left:359.00px;top:752.00px;font-size:11.6px;font-weight:700;color:#000;transform:scaleX(1.1561)">2030</span>
<span class="t" style="left:441.80px;top:453.00px;font-size:11.6px;font-weight:700;color:#000;transform:scaleX(1.0411)">Weigh</span>
<span class="t" style="left:441.80px;top:473.00px;font-size:11.6px;font-weight:700;color:#000;transform:scaleX(0.9891)">Apply</span>
<span class="t" style="left:441.90px;top:493.00px;font-size:11.6px;font-weight:700;color:#000;transform:scaleX(1.0287)">Percentage-wise</span>
<span class="t" style="left:441.80px;top:513.00px;font-size:11.6px;font-weight:700;color:#000;transform:scaleX(1.0411)">Weigh</span>
<span class="t" style="left:441.80px;top:533.00px;font-size:11.6px;font-weight:700;color:#000;transform:scaleX(0.9891)">Apply</span>
<span class="t" style="left:441.90px;top:553.00px;font-size:11.6px;font-weight:700;color:#000;transform:scaleX(1.0287)">Percentage-wise</span>
<span class="t" style="left:441.80px;top:573.00px;font-size:11.6px;font-weight:700;color:#000;transform:scaleX(1.0411)">Weigh</span>
<span class="t" style="left:441.80px;top:593.00px;font-size:11.6px;font-weight:700;color:#000;transform:scaleX(0.9891)">Apply</span>
<span class="t" style="left:441.90px;top:613.00px;font-size:11.6px;font-weight:700;color:#000;transform:scaleX(1.0287)">Percentage-wise</span>
<span class="t" style="left:441.80px;top:633.00px;font-size:11.6px;font-weight:700;color:#000;transform:scaleX(1.0411)">Weigh</span>
<span class="t" style="left:441.80px;top:653.00px;font-size:11.6px;font-weight:700;color:#000;transform:scaleX(0.9891)">Apply</span>
<span class="t" style="left:441.90px;top:673.00px;font-size:11.6px;font-weight:700;color:#000;transform:scaleX(1.0287)">Percentage-wise</span>
<span class="t" style="left:441.80px;top:693.00px;font-size:11.6px;font-weight:700;color:#000;transform:scaleX(1.0411)">Weigh</span>
<span class="t" style="left:441.80px;top:713.00px;font-size:11.6px;font-weight:700;color:#000;transform:scaleX(0.9891)">Apply</span>
<span class="t" style="left:441.90px;top:733.00px;font-size:11.6px;font-weight:700;color:#000;transform:scaleX(1.0287)">Percentage-wise</span>
<span class="t" style="left:441.80px;top:753.00px;font-size:11.6px;font-weight:700;color:#000;transform:scaleX(1.0411)">Weigh</span>
<span class="t" style="left:577.03px;top:453.00px;font-size:11.5px;color:#222;transform:scaleX(1.18)">115</span>
<span class="t" style="left:637.03px;top:453.00px;font-size:11.5px;color:#222;transform:scaleX(1.18)">255</span>
<span class="t" style="left:698.03px;top:453.00px;font-size:11.5px;color:#222;transform:scaleX(1.18)">340</span>
<span class="t" style="left:759.03px;top:453.00px;font-size:11.5px;color:#222;transform:scaleX(1.18)">360</span>
<span class="t" style="left:820.03px;top:453.00px;font-size:11.5px;color:#222;transform:scaleX(1.18)">220</span>
<span class="t" style="left:881.03px;top:453.00px;font-size:11.5px;color:#222;transform:scaleX(1.18)">389</span>
<span class="t" style="left:1125.03px;top:453.00px;font-size:11.5px;color:#222;transform:scaleX(1.18)">195</span>
<span class="t" style="left:1186.03px;top:453.00px;font-size:11.5px;color:#222;transform:scaleX(1.18)">250</span>
<span class="t" style="left:589.90px;top:493.00px;font-size:11.5px;color:#222;transform:scaleX(0.83)">%</span>
<span class="t" style="left:564.92px;top:493.00px;font-size:11.5px;color:#222;transform:scaleX(1.07)">5.41</span>
<span class="t" style="left:650.90px;top:493.00px;font-size:11.5px;color:#222;transform:scaleX(0.83)">%</span>
<span class="t" style="left:619.08px;top:493.00px;font-size:11.5px;color:#222;transform:scaleX(1.07)">12.01</span>
<span class="t" style="left:711.90px;top:493.00px;font-size:11.5px;color:#222;transform:scaleX(0.83)">%</span>
<span class="t" style="left:680.08px;top:493.00px;font-size:11.5px;color:#222;transform:scaleX(1.07)">16.01</span>
<span class="t" style="left:772.90px;top:493.00px;font-size:11.5px;color:#222;transform:scaleX(0.83)">%</span>
<span class="t" style="left:741.08px;top:493.00px;font-size:11.5px;color:#222;transform:scaleX(1.07)">16.95</span>
<span class="t" style="left:833.90px;top:493.00px;font-size:11.5px;color:#222;transform:scaleX(0.83)">%</span>
<span class="t" style="left:802.08px;top:493.00px;font-size:11.5px;color:#222;transform:scaleX(1.07)">10.36</span>
<span class="t" style="left:894.90px;top:493.00px;font-size:11.5px;color:#222;transform:scaleX(0.83)">%</span>
<span class="t" style="left:863.08px;top:493.00px;font-size:11.5px;color:#222;transform:scaleX(1.07)">18.31</span>
<span class="t" style="left:1138.90px;top:493.00px;font-size:11.5px;color:#222;transform:scaleX(0.83)">%</span>
<span class="t" style="left:1113.92px;top:493.00px;font-size:11.5px;color:#222;transform:scaleX(1.07)">9.18</span>
<span class="t" style="left:1199.90px;top:493.00px;font-size:11.5px;color:#222;transform:scaleX(0.83)">%</span>
<span class="t" style="left:1168.99px;top:493.00px;font-size:11.5px;color:#222;transform:scaleX(1.07)">11.77</span>
<span class="t" style="left:577.03px;top:513.00px;font-size:11.5px;color:#222;transform:scaleX(1.18)">112</span>
<span class="t" style="left:637.03px;top:513.00px;font-size:11.5px;color:#222;transform:scaleX(1.18)">255</span>
<span class="t" style="left:698.03px;top:513.00px;font-size:11.5px;color:#222;transform:scaleX(1.18)">345</span>
<span class="t" style="left:757.85px;top:513.00px;font-size:11.5px;color:#222;transform:scaleX(1.18)">354</span>
<span class="t" style="left:820.03px;top:513.00px;font-size:11.5px;color:#222;transform:scaleX(1.18)">220</span>
<span class="t" style="left:881.03px;top:513.00px;font-size:11.5px;color:#222;transform:scaleX(1.18)">383</span>
<span class="t" style="left:1125.03px;top:513.00px;font-size:11.5px;color:#222;transform:scaleX(1.18)">195</span>
<span class="t" style="left:1186.03px;top:513.00px;font-size:11.5px;color:#222;transform:scaleX(1.18)">250</span>
<span class="t" style="left:589.90px;top:553.00px;font-size:11.5px;color:#222;transform:scaleX(0.83)">%</span>
<span class="t" style="left:564.92px;top:553.00px;font-size:11.5px;color:#222;transform:scaleX(1.07)">5.30</span>
<span class="t" style="left:650.90px;top:553.00px;font-size:11.5px;color:#222;transform:scaleX(0.83)">%</span>
<span class="t" style="left:619.08px;top:553.00px;font-size:11.5px;color:#222;transform:scaleX(1.07)">12.06</span>
<span class="t" style="left:711.90px;top:553.00px;font-size:11.5px;color:#222;transform:scaleX(0.83)">%</span>
<span class="t" style="left:680.08px;top:553.00px;font-size:11.5px;color:#222;transform:scaleX(1.07)">16.32</span>
<span class="t" style="left:772.90px;top:553.00px;font-size:11.5px;color:#222;transform:scaleX(0.83)">%</span>
<span class="t" style="left:741.08px;top:553.00px;font-size:11.5px;color:#222;transform:scaleX(1.07)">16.75</span>
<span class="t" style="left:833.90px;top:553.00px;font-size:11.5px;color:#222;transform:scaleX(0.83)">%</span>
<span class="t" style="left:802.08px;top:553.00px;font-size:11.5px;color:#222;transform:scaleX(1.07)">10.41</span>
<span class="t" style="left:894.90px;top:553.00px;font-size:11.5px;color:#222;transform:scaleX(0.83)">%</span>
<span class="t" style="left:863.08px;top:553.00px;font-size:11.5px;color:#222;transform:scaleX(1.07)">18.12</span>
<span class="t" style="left:1138.90px;top:553.00px;font-size:11.5px;color:#222;transform:scaleX(0.83)">%</span>
<span class="t" style="left:1113.92px;top:553.00px;font-size:11.5px;color:#222;transform:scaleX(1.07)">9.22</span>
<span class="t" style="left:1199.90px;top:553.00px;font-size:11.5px;color:#222;transform:scaleX(0.83)">%</span>
<span class="t" style="left:1168.99px;top:553.00px;font-size:11.5px;color:#222;transform:scaleX(1.07)">11.83</span>
<span class="t" style="left:577.03px;top:573.00px;font-size:11.5px;color:#222;transform:scaleX(1.18)">116</span>
<span class="t" style="left:637.03px;top:573.00px;font-size:11.5px;color:#222;transform:scaleX(1.18)">255</span>
<span class="t" style="left:698.03px;top:573.00px;font-size:11.5px;color:#222;transform:scaleX(1.18)">345</span>
<span class="t" style="left:757.85px;top:573.00px;font-size:11.5px;color:#222;transform:scaleX(1.18)">354</span>
<span class="t" style="left:820.03px;top:573.00px;font-size:11.5px;color:#222;transform:scaleX(1.18)">220</span>
<span class="t" style="left:881.03px;top:573.00px;font-size:11.5px;color:#222;transform:scaleX(1.18)">383</span>
<span class="t" style="left:1125.03px;top:573.00px;font-size:11.5px;color:#222;transform:scaleX(1.18)">195</span>
<span class="t" style="left:1186.03px;top:573.00px;font-size:11.5px;color:#222;transform:scaleX(1.18)">250</span>
<span class="t" style="left:589.90px;top:613.00px;font-size:11.5px;color:#222;transform:scaleX(0.83)">%</span>
<span class="t" style="left:564.92px;top:613.00px;font-size:11.5px;color:#222;transform:scaleX(1.07)">5.48</span>
<span class="t" style="left:650.90px;top:613.00px;font-size:11.5px;color:#222;transform:scaleX(0.83)">%</span>
<span class="t" style="left:618.01px;top:613.00px;font-size:11.5px;color:#222;transform:scaleX(1.07)">12.04</span>
<span class="t" style="left:711.90px;top:613.00px;font-size:11.5px;color:#222;transform:scaleX(0.83)">%</span>
<span class="t" style="left:680.08px;top:613.00px;font-size:11.5px;color:#222;transform:scaleX(1.07)">16.29</span>
<span class="t" style="left:772.90px;top:613.00px;font-size:11.5px;color:#222;transform:scaleX(0.83)">%</span>
<span class="t" style="left:741.08px;top:613.00px;font-size:11.5px;color:#222;transform:scaleX(1.07)">16.71</span>
<span class="t" style="left:833.90px;top:613.00px;font-size:11.5px;color:#222;transform:scaleX(0.83)">%</span>
<span class="t" style="left:802.08px;top:613.00px;font-size:11.5px;color:#222;transform:scaleX(1.07)">10.39</span>
<span class="t" style="left:894.90px;top:613.00px;font-size:11.5px;color:#222;transform:scaleX(0.83)">%</span>
<span class="t" style="left:863.08px;top:613.00px;font-size:11.5px;color:#222;transform:scaleX(1.07)">18.08</span>
<span class="t" style="left:1138.90px;top:613.00px;font-size:11.5px;color:#222;transform:scaleX(0.83)">%</span>
<span class="t" style="left:1113.92px;top:613.00px;font-size:11.5px;color:#222;transform:scaleX(1.07)">9.21</span>
<span class="t" style="left:1199.90px;top:613.00px;font-size:11.5px;color:#222;transform:scaleX(0.83)">%</span>
<span class="t" style="left:1168.99px;top:613.00px;font-size:11.5px;color:#222;transform:scaleX(1.07)">11.80</span>
</body></html>
